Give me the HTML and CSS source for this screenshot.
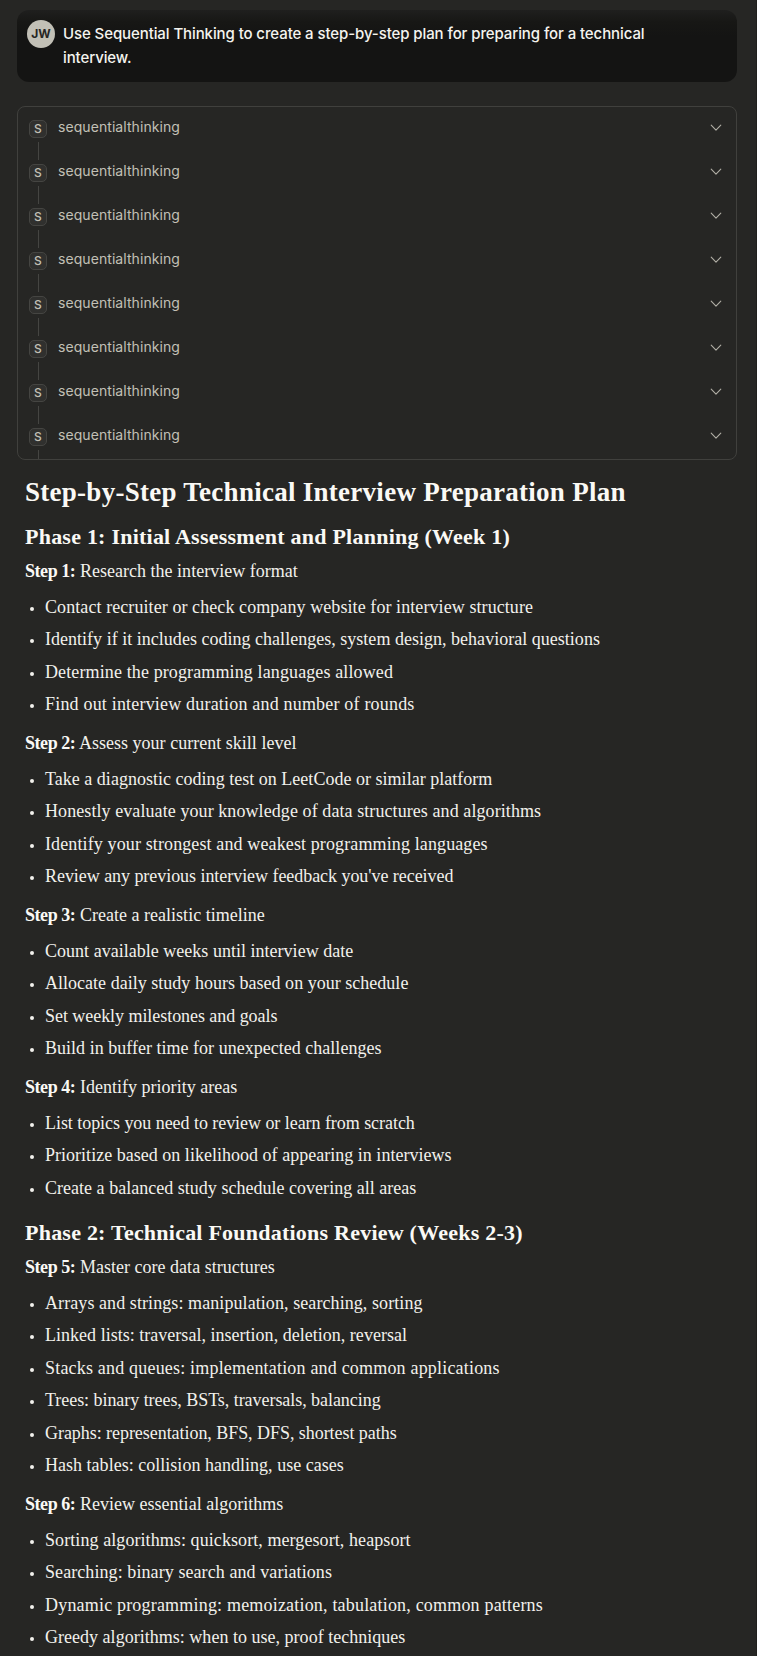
FILE: index.html
```
<!DOCTYPE html>
<html lang="en">
<head>
<meta charset="utf-8">
<title>Technical interview plan</title>
<link rel="stylesheet" href="styles.css">
</head>
<body>
<svg class="defs" aria-hidden="true"><symbol id="chev" viewBox="0 0 12 8"><path d="M1.2 1.2l4.8 5 4.8-5" fill="none" stroke="currentColor" stroke-width="1.1" stroke-linecap="round" stroke-linejoin="round"/></symbol></svg>
<main class="chat">
  <section class="user">
    <span class="avatar">JW</span>
    <p class="prompt">Use Sequential Thinking to create a step-by-step plan for preparing for a technical interview.</p>
  </section>

  <section class="tools">
    <div class="tool"><div class="rail"><span class="badge">S</span><i class="line"></i></div><span class="name">sequentialthinking</span><svg class="chev"><use href="#chev"/></svg></div>
    <div class="tool"><div class="rail"><span class="badge">S</span><i class="line"></i></div><span class="name">sequentialthinking</span><svg class="chev"><use href="#chev"/></svg></div>
    <div class="tool"><div class="rail"><span class="badge">S</span><i class="line"></i></div><span class="name">sequentialthinking</span><svg class="chev"><use href="#chev"/></svg></div>
    <div class="tool"><div class="rail"><span class="badge">S</span><i class="line"></i></div><span class="name">sequentialthinking</span><svg class="chev"><use href="#chev"/></svg></div>
    <div class="tool"><div class="rail"><span class="badge">S</span><i class="line"></i></div><span class="name">sequentialthinking</span><svg class="chev"><use href="#chev"/></svg></div>
    <div class="tool"><div class="rail"><span class="badge">S</span><i class="line"></i></div><span class="name">sequentialthinking</span><svg class="chev"><use href="#chev"/></svg></div>
    <div class="tool"><div class="rail"><span class="badge">S</span><i class="line"></i></div><span class="name">sequentialthinking</span><svg class="chev"><use href="#chev"/></svg></div>
    <div class="tool"><div class="rail"><span class="badge">S</span><i class="line"></i></div><span class="name">sequentialthinking</span><svg class="chev"><use href="#chev"/></svg></div>
  </section>

  <article class="answer">
    <h1 class="title">Step-by-Step Technical Interview Preparation Plan</h1>

    <h2 class="phase">Phase 1: Initial Assessment and Planning (Week 1)</h2>
    <p class="step"><b class="label">Step 1:</b> Research the interview format</p>
    <ul class="list">
      <li class="item mid">Contact recruiter or check company website for interview structure</li>
      <li class="item">Identify if it includes coding challenges, system design, behavioral questions</li>
      <li class="item wide">Determine the programming languages allowed</li>
      <li class="item wider">Find out interview duration and number of rounds</li>
    </ul>
    <p class="step"><b class="label">Step 2:</b> Assess your current skill level</p>
    <ul class="list">
      <li class="item">Take a diagnostic coding test on LeetCode or similar platform</li>
      <li class="item mid">Honestly evaluate your knowledge of data structures and algorithms</li>
      <li class="item wide">Identify your strongest and weakest programming languages</li>
      <li class="item snug">Review any previous interview feedback you've received</li>
    </ul>
    <p class="step"><b class="label">Step 3:</b> Create a realistic timeline</p>
    <ul class="list">
      <li class="item">Count available weeks until interview date</li>
      <li class="item">Allocate daily study hours based on your schedule</li>
      <li class="item snug">Set weekly milestones and goals</li>
      <li class="item">Build in buffer time for unexpected challenges</li>
    </ul>
    <p class="step"><b class="label">Step 4:</b> Identify priority areas</p>
    <ul class="list">
      <li class="item snug">List topics you need to review or learn from scratch</li>
      <li class="item">Prioritize based on likelihood of appearing in interviews</li>
      <li class="item">Create a balanced study schedule covering all areas</li>
    </ul>

    <h2 class="phase">Phase 2: Technical Foundations Review (Weeks 2-3)</h2>
    <p class="step"><b class="label">Step 5:</b> Master core data structures</p>
    <ul class="list">
      <li class="item mid">Arrays and strings: manipulation, searching, sorting</li>
      <li class="item">Linked lists: traversal, insertion, deletion, reversal</li>
      <li class="item wider">Stacks and queues: implementation and common applications</li>
      <li class="item snug">Trees: binary trees, BSTs, traversals, balancing</li>
      <li class="item snug">Graphs: representation, BFS, DFS, shortest paths</li>
      <li class="item">Hash tables: collision handling, use cases</li>
    </ul>
    <p class="step"><b class="label">Step 6:</b> Review essential algorithms</p>
    <ul class="list">
      <li class="item mid">Sorting algorithms: quicksort, mergesort, heapsort</li>
      <li class="item mid">Searching: binary search and variations</li>
      <li class="item wider">Dynamic programming: memoization, tabulation, common patterns</li>
      <li class="item">Greedy algorithms: when to use, proof techniques</li>
    </ul>
  </article>
</main>
</body>
</html>
```
FILE: styles.css
```
* { box-sizing: border-box; }
body { margin: 0; height: 1656px; overflow: hidden; background: #262624; color: #faf9f5; border-right: 1px solid #1f1f1d; }
.defs { display: none; }
.chat { padding: 10px 19px 0 17px; }

.user {
  display: flex; align-items: flex-start; gap: 8px;
  height: 72px; padding: 10px; border-radius: 12px;
  background: linear-gradient(#1f1f1e, #171715 12px, #141413 26px);
}
.avatar {
  flex: none; width: 28px; height: 28px; border-radius: 50%;
  background: #c2c0b6; color: #262624;
  font: 700 12px/28px Inter, sans-serif; text-align: center;
}
.prompt {
  margin: 2px 0 0; width: 610px; color: #f5f4ef;
  font: 500 15px/24px Inter, sans-serif; letter-spacing: -0.095px;
}

.tools {
  height: 354px; margin-top: 24px; overflow: hidden;
  border: 1px solid #40403d; border-radius: 8px;
}
.tool { display: flex; height: 44px; padding: 13px 14px 0 11px; }
.rail { display: flex; flex-direction: column; align-items: center; gap: 4px; width: 18px; }
.badge {
  flex: none; width: 18px; height: 18px; border: 1px solid #454542; border-radius: 5px;
  background: #30302e; color: #c2c0b6;
  font: 500 12px/16px Inter, sans-serif; text-align: center;
}
.line { flex: none; width: 1px; height: 18px; background: #454542; }
.name {
  flex: 1; margin: -3px 0 0 11px; color: #c2c0b6;
  font: 400 14px/20px Inter, sans-serif; letter-spacing: 0.07px;
}
.chev { width: 12px; height: 8px; margin-top: 4px; color: #b0aea5; }

.answer {
  padding: 15px 8px 0; color: #f2f1ec;
  font-family: "Liberation Serif", serif; font-size: 18px;
  letter-spacing: 0.02px;
}
.title { margin: 0; font-size: 27px; line-height: 34px; letter-spacing: 0.27px; color: #faf9f5; }
.phase { margin: 13.6px 0 8.4px; font-size: 22px; line-height: 28px; letter-spacing: 0.23px; color: #faf9f5; }
.list + .phase { margin-top: 18.1px; }
.step { margin: 0; line-height: 24px; }
.label { color: #faf9f5; letter-spacing: -0.45px; }
.list { margin: 12px 0 14px; padding: 0; list-style: none; display: grid; gap: 8px; }
.item { display: flex; align-items: center; line-height: 24.5px; white-space: nowrap; }
.item::before {
  content: ""; width: 4px; height: 4px; margin: 3px 11px 0 5px;
  border-radius: 50%; background: #f2f1ec;
}
.snug { letter-spacing: -0.05px; }
.mid { letter-spacing: 0.08px; }
.wide { letter-spacing: 0.12px; }
.wider { letter-spacing: 0.19px; }
```
